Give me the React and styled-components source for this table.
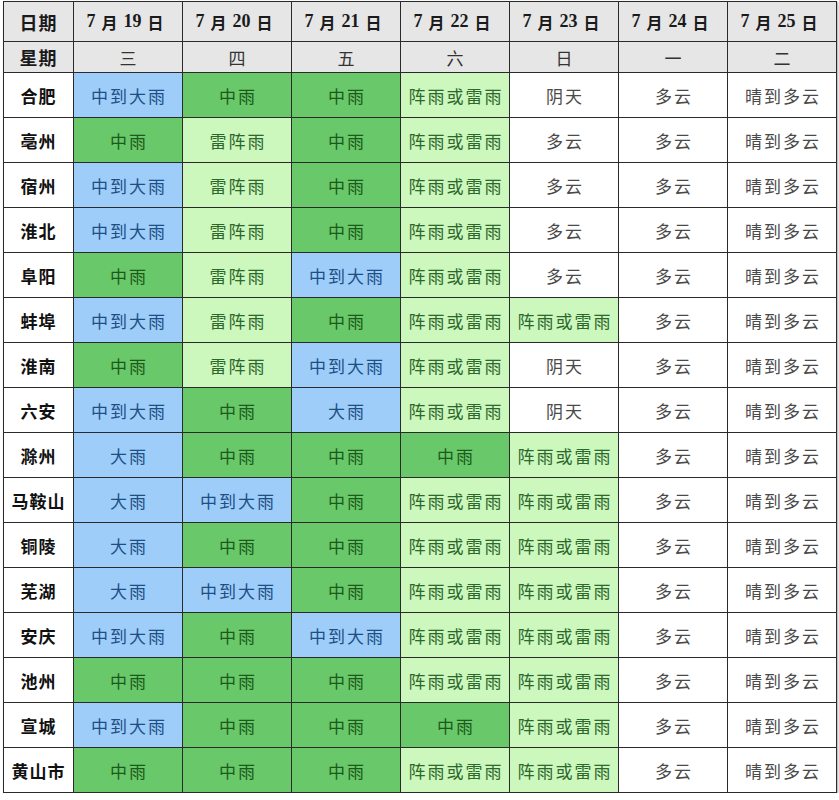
import styled, { createGlobalStyle } from "styled-components";

const GlobalStyle = createGlobalStyle`
    body {
        margin: 0;
        background: #fff;
        font-family: "Noto Sans CJK SC", "Liberation Serif", serif;
    }
`;

const palette = {
    B: { bg: "#9dcdf8", fg: "#1d4f86" },
    D: { bg: "#69c869", fg: "#1c5a1c" },
    L: { bg: "#ccf7bd", fg: "#2c672c" },
    W: { bg: "#ffffff", fg: "#4a4a4a" },
};

const dates = ["19", "20", "21", "22", "23", "24", "25"];
const weekdays = ["三", "四", "五", "六", "日", "一", "二"];

const TEXT = {
    B: "中到大雨",
    b: "大雨",
    D: "中雨",
    L: "雷阵雨",
    S: "阵雨或雷雨",
    Y: "阴天",
    C: "多云",
    Q: "晴到多云",
};

const KIND = { B: "B", b: "B", D: "D", L: "L", S: "L", Y: "W", C: "W", Q: "W" };

const rows = [
    ["合肥", "BDDSYCQ"],
    ["亳州", "DLDSCCQ"],
    ["宿州", "BLDSCCQ"],
    ["淮北", "BLDSCCQ"],
    ["阜阳", "DLBSCCQ"],
    ["蚌埠", "BLDSSCQ"],
    ["淮南", "DLBSYCQ"],
    ["六安", "BDbSYCQ"],
    ["滁州", "bDDDSCQ"],
    ["马鞍山", "bBDSSCQ"],
    ["铜陵", "bDDSSCQ"],
    ["芜湖", "bBDSSCQ"],
    ["安庆", "BDBSSCQ"],
    ["池州", "DDDSSCQ"],
    ["宣城", "BDDDSCQ"],
    ["黄山市", "DDDSSCQ"],
];

export default function App() {
    return (
        <Page>
            <GlobalStyle />
            <Table>
                <HeadCell>日期</HeadCell>
                {dates.map((d) => (
                    <DateCell key={d}>
                        7<Cjk>月</Cjk>{d}<Cjk>日</Cjk>
                    </DateCell>
                ))}
                <HeadCell>星期</HeadCell>
                {weekdays.map((w) => (
                    <WeekCell key={w}>{w}</WeekCell>
                ))}
                {rows.map(([city, codes]) => (
                    <Row key={city} city={city} codes={codes} />
                ))}
            </Table>
        </Page>
    );
}

function Row({ city, codes }) {
    return (
        <>
            <CityCell>{city}</CityCell>
            {codes.split("").map((c, i) => (
                <WeatherCell key={i} $kind={KIND[c]}>
                    {TEXT[c]}
                </WeatherCell>
            ))}
        </>
    );
}

const Page = styled.div`
    padding: 1px 0 0 3px;
`;

const Table = styled.div`
    display: grid;
    grid-template-columns: 70px repeat(7, 109px);
    grid-template-rows: 40px 31px repeat(16, 45px);
    width: max-content;
    border-top: 1px solid #2a2a2a;
    border-left: 1px solid #2a2a2a;
    box-shadow: 1px 1px 2px rgba(0, 0, 0, 0.35);
`;

const Cell = styled.div`
    box-sizing: border-box;
    display: flex;
    align-items: center;
    justify-content: center;
    border-right: 1px solid #2a2a2a;
    border-bottom: 1px solid #2a2a2a;
    white-space: nowrap;
`;

const HeadCell = styled(Cell)`
    background: #e6e6e6;
    color: #1a1a1a;
    font-weight: 700;
    font-size: 18px;
    letter-spacing: 1px;
`;

const DateCell = styled(Cell)`
    background: #e6e6e6;
    color: #1a1a1a;
    font-family: "Liberation Serif", "Noto Sans CJK SC", serif;
    font-weight: 700;
    font-size: 18px;
`;

const Cjk = styled.span`
    font-family: "Noto Sans CJK SC", sans-serif;
    font-size: 16px;
    margin: 0 6px;
`;

const WeekCell = styled(Cell)`
    background: #e6e6e6;
    color: #333;
    font-size: 17px;
`;

const CityCell = styled(Cell)`
    background: #fff;
    color: #111;
    font-weight: 700;
    font-size: 17px;
    letter-spacing: 1px;
`;

const WeatherCell = styled(Cell)`
    background: ${(p) => palette[p.$kind].bg};
    color: ${(p) => palette[p.$kind].fg};
    font-size: 17px;
    letter-spacing: 2px;
    padding-left: 2px;
`;
